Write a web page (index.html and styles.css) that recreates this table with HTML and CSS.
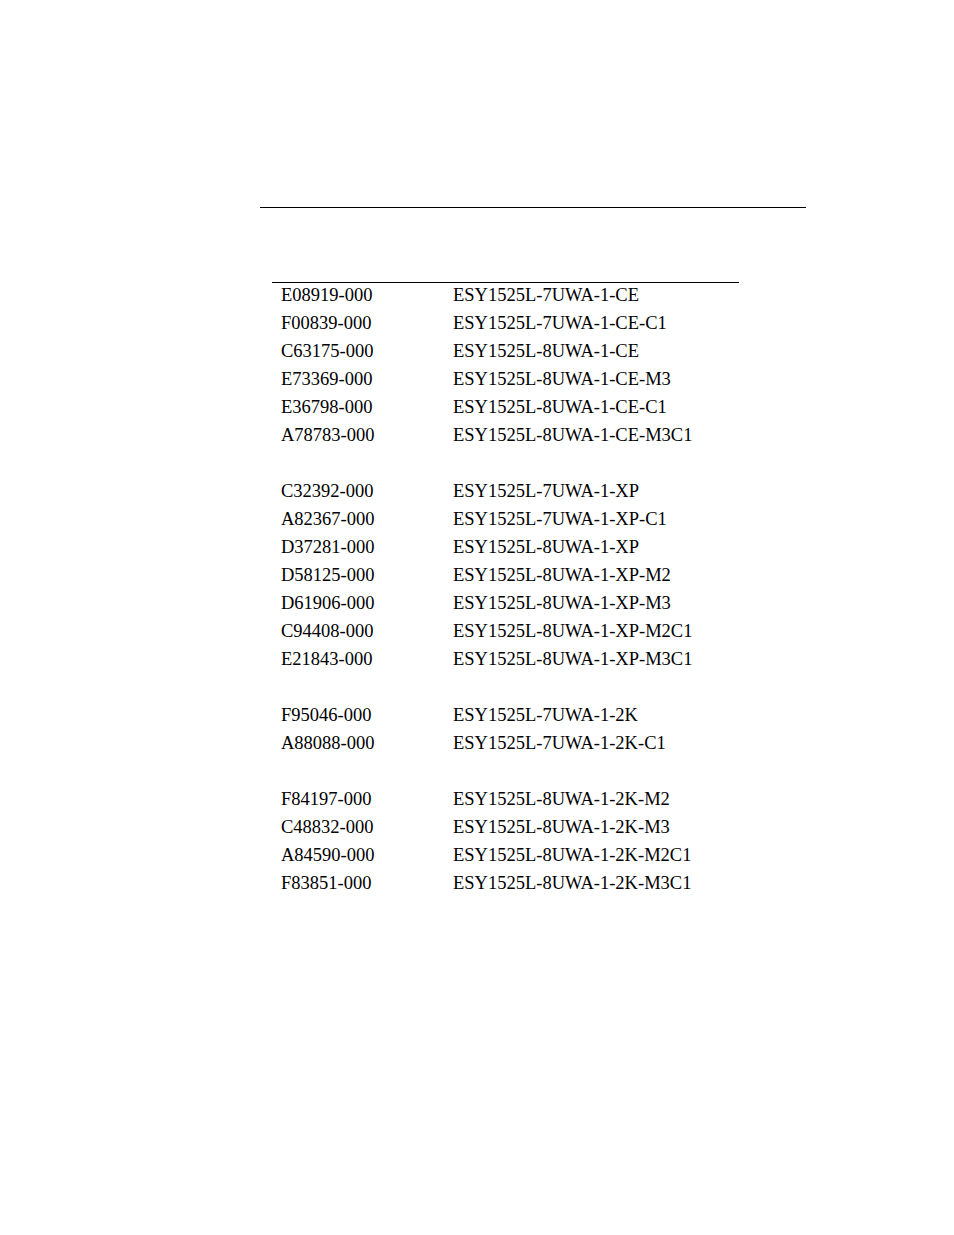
FILE: index.html
```html
<!DOCTYPE html>
<html lang="en">
<head>
<meta charset="utf-8">
<title>Part numbers</title>
<link rel="stylesheet" href="styles.css">
</head>
<body>
<main class="page">
  <div class="rule"></div>
  <section class="parts">
    <div class="group">
      <div class="row"><span class="pn">E08919-000</span><span class="model">ESY1525L-7UWA-1-CE</span></div>
      <div class="row"><span class="pn">F00839-000</span><span class="model">ESY1525L-7UWA-1-CE-C1</span></div>
      <div class="row"><span class="pn">C63175-000</span><span class="model">ESY1525L-8UWA-1-CE</span></div>
      <div class="row"><span class="pn">E73369-000</span><span class="model">ESY1525L-8UWA-1-CE-M3</span></div>
      <div class="row"><span class="pn">E36798-000</span><span class="model">ESY1525L-8UWA-1-CE-C1</span></div>
      <div class="row"><span class="pn">A78783-000</span><span class="model">ESY1525L-8UWA-1-CE-M3C1</span></div>
    </div>
    <div class="group">
      <div class="row"><span class="pn">C32392-000</span><span class="model">ESY1525L-7UWA-1-XP</span></div>
      <div class="row"><span class="pn">A82367-000</span><span class="model">ESY1525L-7UWA-1-XP-C1</span></div>
      <div class="row"><span class="pn">D37281-000</span><span class="model">ESY1525L-8UWA-1-XP</span></div>
      <div class="row"><span class="pn">D58125-000</span><span class="model">ESY1525L-8UWA-1-XP-M2</span></div>
      <div class="row"><span class="pn">D61906-000</span><span class="model">ESY1525L-8UWA-1-XP-M3</span></div>
      <div class="row"><span class="pn">C94408-000</span><span class="model">ESY1525L-8UWA-1-XP-M2C1</span></div>
      <div class="row"><span class="pn">E21843-000</span><span class="model">ESY1525L-8UWA-1-XP-M3C1</span></div>
    </div>
    <div class="group">
      <div class="row"><span class="pn">F95046-000</span><span class="model">ESY1525L-7UWA-1-2K</span></div>
      <div class="row"><span class="pn">A88088-000</span><span class="model">ESY1525L-7UWA-1-2K-C1</span></div>
    </div>
    <div class="group">
      <div class="row"><span class="pn">F84197-000</span><span class="model">ESY1525L-8UWA-1-2K-M2</span></div>
      <div class="row"><span class="pn">C48832-000</span><span class="model">ESY1525L-8UWA-1-2K-M3</span></div>
      <div class="row"><span class="pn">A84590-000</span><span class="model">ESY1525L-8UWA-1-2K-M2C1</span></div>
      <div class="row"><span class="pn">F83851-000</span><span class="model">ESY1525L-8UWA-1-2K-M3C1</span></div>
    </div>
  </section>
</main>
</body>
</html>
```

FILE: styles.css
```css
html, body {
  margin: 0;
  padding: 0;
  background: #ffffff;
}

body {
  font-family: "Liberation Serif", "Times New Roman", serif;
  color: #000000;
}

.page {
  width: 954px;
  padding-top: 207px;
  box-sizing: border-box;
}

.rule {
  margin-left: 260px;
  width: 546px;
  height: 1px;
  background: #000000;
}

.parts {
  margin-left: 272px;
  margin-top: 74px;
  width: 467px;
  border-top: 1px solid #000000;
  display: flex;
  flex-direction: column;
  gap: 28px;
}

.group {
  display: flex;
  flex-direction: column;
}

.group:first-child {
  margin-top: -2px;
}

.row {
  display: grid;
  grid-template-columns: 172px 1fr;
  padding-left: 9px;
  height: 28px;
  line-height: 28px;
  font-size: 18.5px;
  white-space: nowrap;
}
```
